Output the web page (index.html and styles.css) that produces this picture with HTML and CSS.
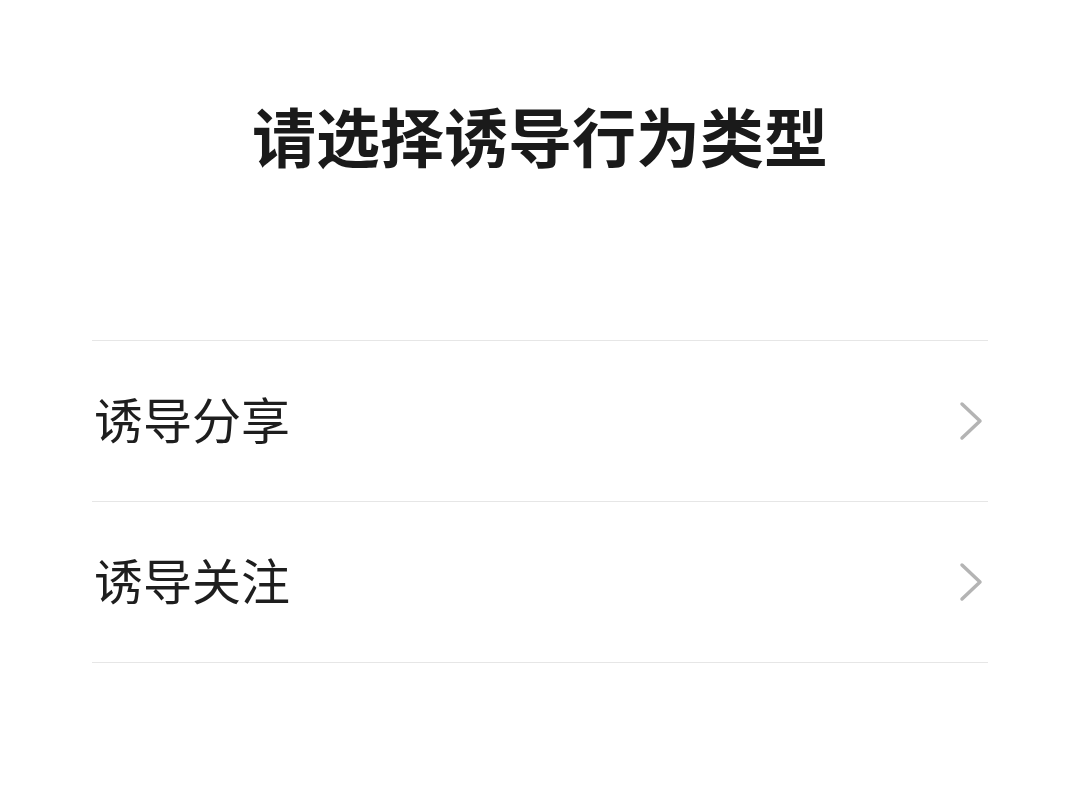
FILE: index.html
```html
<!DOCTYPE html>
<html lang="zh-CN">
<head>
    <meta charset="UTF-8">
    <meta name="viewport" content="width=device-width, initial-scale=1.0">
    <title>请选择诱导行为类型</title>
    <link rel="stylesheet" href="styles.css">
</head>
<body>
    <div class="page">
        <h1 class="title">请选择诱导行为类型</h1>

        <ul class="options">
            <li class="option">
                <span class="option-label">诱导分享</span>
                <svg class="chevron" width="24" height="40" viewBox="0 0 24 40">
                    <polyline points="3,3 21,20 3,37" fill="none" stroke="#b4b4b4" stroke-width="3.5" stroke-linecap="round" stroke-linejoin="round"/>
                </svg>
            </li>
            <li class="option">
                <span class="option-label">诱导关注</span>
                <svg class="chevron" width="24" height="40" viewBox="0 0 24 40">
                    <polyline points="3,3 21,20 3,37" fill="none" stroke="#b4b4b4" stroke-width="3.5" stroke-linecap="round" stroke-linejoin="round"/>
                </svg>
            </li>
        </ul>
    </div>
</body>
</html>
```

FILE: styles.css
```css
body {
    margin: 0;
    background-color: #fff;
    font-family: "Noto Sans CJK SC", "Noto Sans", sans-serif;
    color: #1a1a1a;
}

.page {
    padding: 0 92px;
}

.title {
    margin: 0;
    padding-top: 95px;
    height: 340px;
    box-sizing: border-box;
    text-align: center;
    font-size: 64px;
    line-height: 78px;
    font-weight: 700;
    letter-spacing: 0;
}

.options {
    list-style: none;
    margin: 0;
    padding: 0;
    border-top: 1px solid #e6e6e6;
}

.option {
    display: flex;
    align-items: center;
    justify-content: space-between;
    height: 160px;
    border-bottom: 1px solid #e6e6e6;
    padding: 0 5px 0 2px;
}

.option-label {
    font-size: 49px;
    line-height: 1;
    color: #1e1e1e;
    margin-bottom: 8px;
}

.chevron {
    display: block;
}
```
